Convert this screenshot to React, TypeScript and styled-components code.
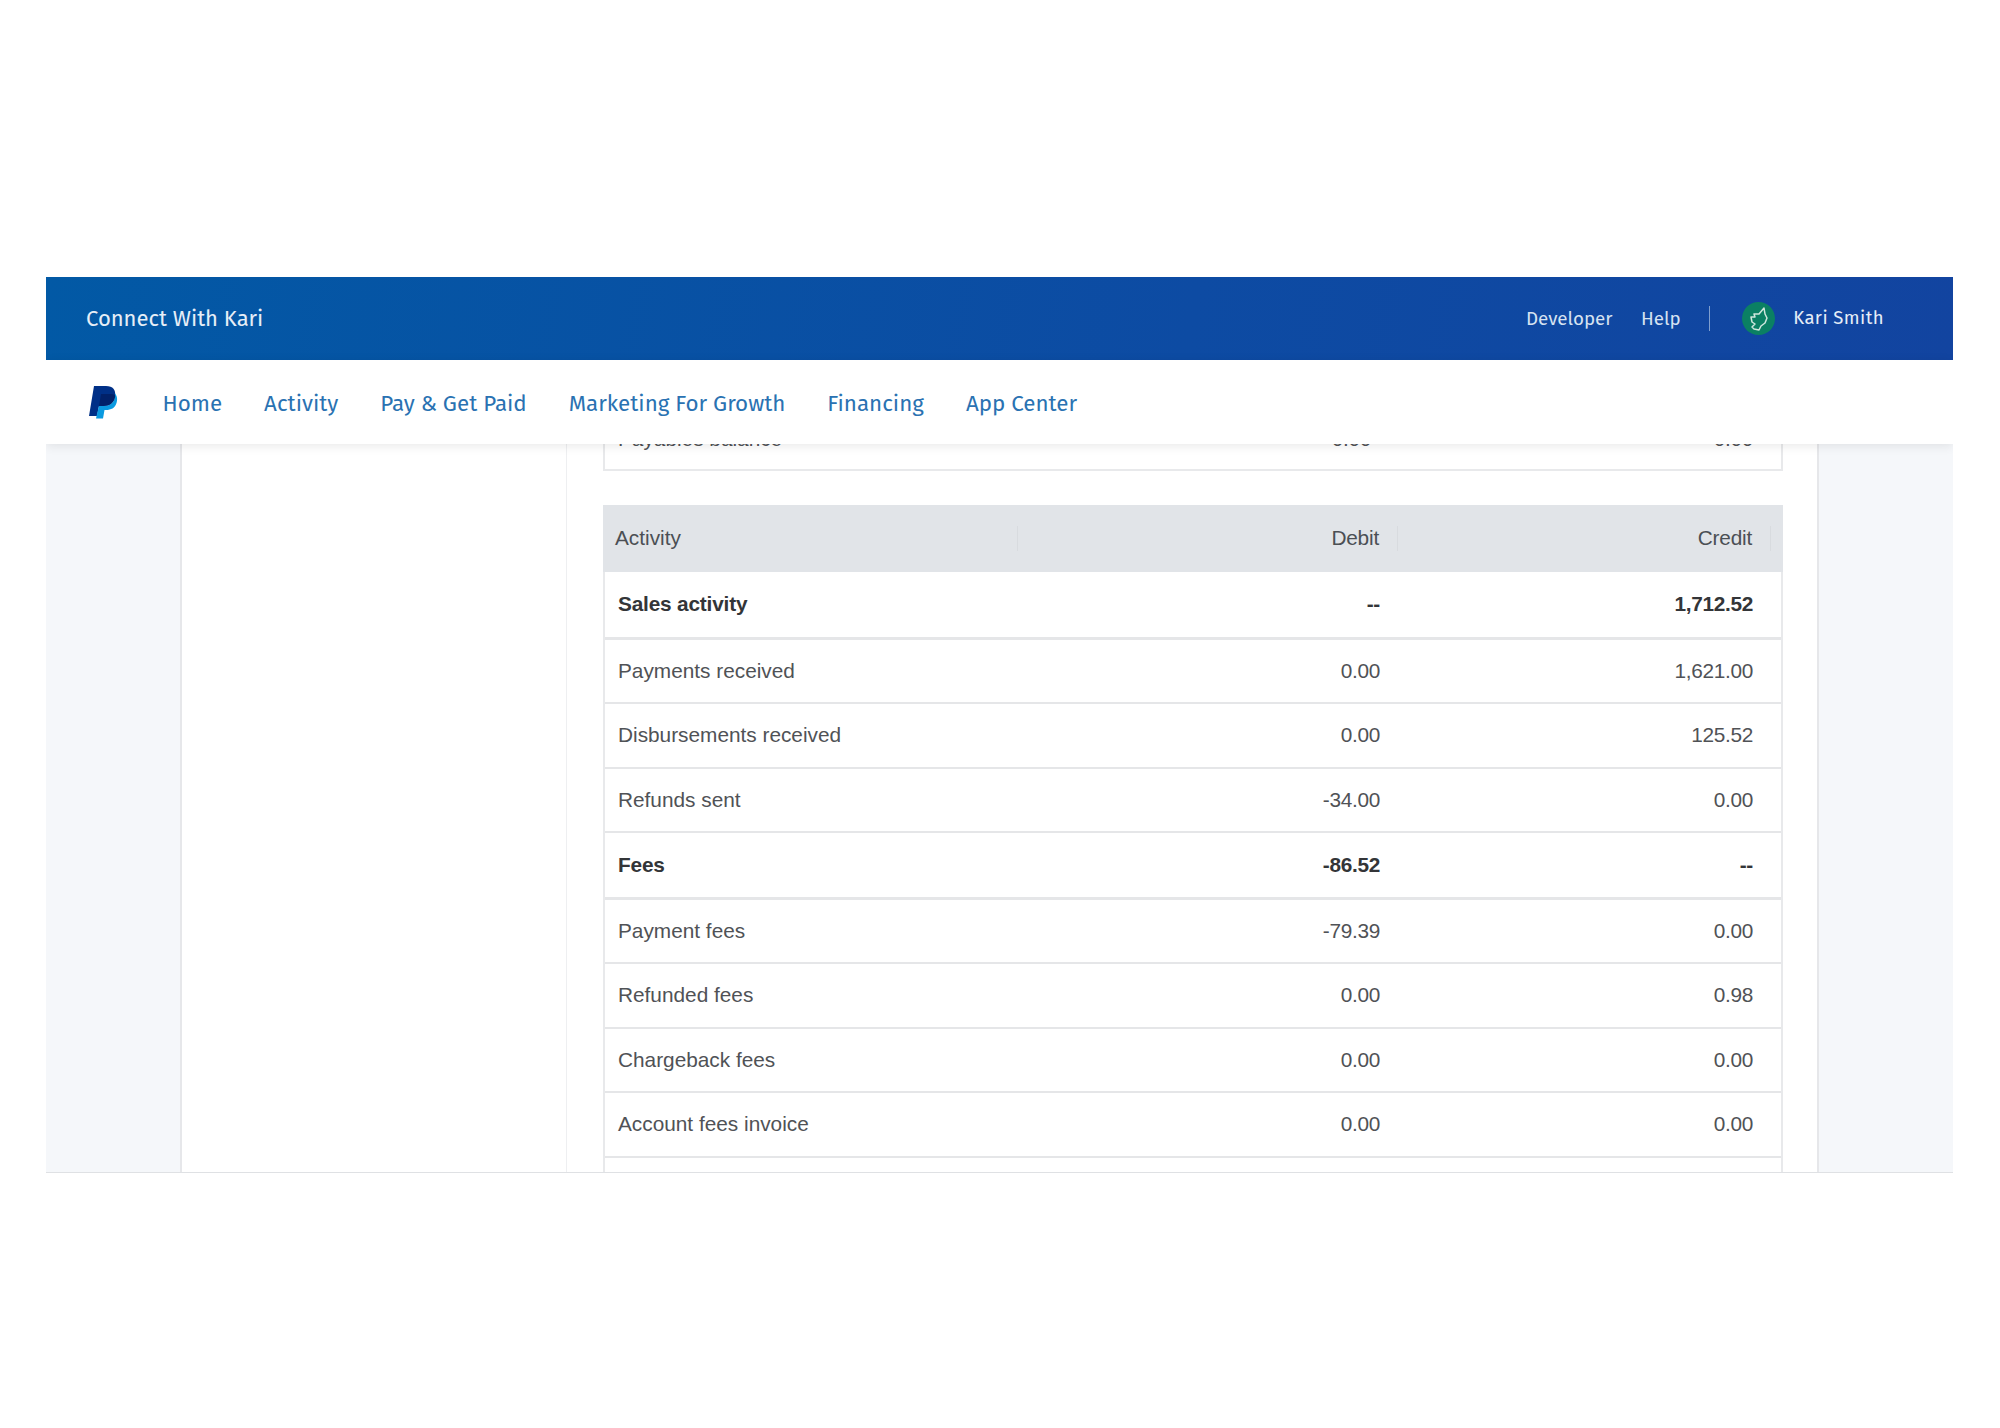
import React from "react";
import styled, { createGlobalStyle } from "styled-components";

const Global = createGlobalStyle`
  html, body { margin: 0; padding: 0; background: #fff; }
  * { box-sizing: border-box; }
`;

const Frame = styled.div`
  margin: 277px 0 0 46px;
  width: 1907px;
  height: 896px;
  display: flex;
  flex-direction: column;
  overflow: hidden;
  border-bottom: 1px solid #dfe1e4;
  background: #f5f7fa;
`;

const TopBar = styled.header`
  height: 83px;
  flex: none;
  display: flex;
  align-items: center;
  padding: 0 69px 0 40px;
  background: linear-gradient(100deg, #0259a5 0%, #0d4ba3 60%, #1244a0 100%);
  color: #e6eef7;
  font-family: "Fira Sans", "Noto Sans", sans-serif;
`;

const Brand = styled.div`
  font-size: 22px;
  flex: 1;
`;

const TopLink = styled.span`
  font-size: 18.8px;
  margin-right: 28.5px;
  color: #d6e2f1;
`;

const Separator = styled.span`
  width: 1px;
  height: 25px;
  background: #7f9fcf;
  margin-right: 32px;
`;

const Avatar = styled.svg`
  width: 33px;
  height: 33px;
  margin-right: 18px;
`;

const UserName = styled.span`
  font-size: 18.5px;
  letter-spacing: 0.4px;
  position: relative;
  top: -1px;
`;

const NavBar = styled.nav`
  height: 84px;
  flex: none;
  display: flex;
  align-items: center;
  padding: 0 0 0 42px;
  background: #fff;
  box-shadow: 0 2px 10px rgba(0, 0, 0, 0.09);
  position: relative;
  z-index: 2;
  font-family: "Fira Sans", "Noto Sans", sans-serif;
`;

const Logo = styled.svg`
  width: 30px;
  height: 34px;
  margin-right: 44.5px;
`;

const NavLink = styled.a`
  font-size: 22.35px;
  color: #2a72b2;
  margin-right: 42px;
  padding-top: 3px;
`;

const Body = styled.div`
  flex: 1;
  min-height: 0;
  display: flex;
  padding: 0 134px 0 134px;
`;

const Sidebar = styled.aside`
  width: 387px;
  flex: none;
  background: #fff;
  border-left: 2px solid #e6e7ea;
  border-right: 1px solid #eeeff1;
`;

const Main = styled.main`
  flex: 1;
  background: #fff;
  border-right: 2px solid #e6e7ea;
  padding: 0 34px 0 36px;
  overflow: hidden;
  font-family: "Liberation Sans", Arial, sans-serif;
`;

const Scrolled = styled.div`
  margin-top: -38px;
`;

const Table = styled.section`
  border: 2px solid #e8e9eb;
  border-top: none;
  margin-bottom: 34px;
  background: #fff;
`;

const BalanceRow = styled.div`
  display: grid;
  grid-template-columns: 413px 378px 1fr;
  align-items: center;
  height: 62.5px;
  padding-top: 3px;
  font-size: 20.8px;
  color: #505256;
`;

const Row = styled.div<{ $bold?: boolean; $first?: boolean }>`
  display: grid;
  grid-template-columns: 413px 378px 1fr;
  align-items: center;
  height: ${(p) => (p.$first ? "68px" : p.$bold ? "66.5px" : "64.5px")};
  border-bottom: ${(p) => (p.$bold ? "3px" : "2px")} solid #e5e6e8;
  font-size: 20.8px;
  font-weight: ${(p) => (p.$bold ? 700 : 400)};
  color: ${(p) => (p.$bold ? "#333538" : "#505256")};
`;

const LabelCell = styled.div<{ $bold?: boolean }>`
  padding-left: 13px;
  letter-spacing: ${(p) => (p.$bold ? "-0.18px" : "0")};
`;

const DebitCell = styled.div<{ $pad?: number }>`
  text-align: right;
  letter-spacing: -0.3px;
  padding-right: ${(p) => p.$pad ?? 16}px;
`;

const CreditCell = styled.div`
  text-align: right;
  letter-spacing: -0.3px;
  padding-right: 28px;
`;

const TableHead = styled.div`
  display: grid;
  grid-template-columns: 415px 380px 373px 1fr;
  align-items: center;
  height: 67px;
  margin: 0 -2px;
  background: #e1e4e8;
  font-size: 20.8px;
  color: #4b4f54;
`;

const HeadCell = styled.div<{ $right?: boolean }>`
  height: 25px;
  line-height: 24px;
  padding: 0 18px 0 12px;
  text-align: ${(p) => (p.$right ? "right" : "left")};
  letter-spacing: ${(p) => (p.$right ? "-0.2px" : "0")};
  border-right: 1px solid #d8dbdf;
`;

const rows: [string, string, string, boolean?][] = [
  ["Sales activity", "--", "1,712.52", true],
  ["Payments received", "0.00", "1,621.00"],
  ["Disbursements received", "0.00", "125.52"],
  ["Refunds sent", "-34.00", "0.00"],
  ["Fees", "-86.52", "--", true],
  ["Payment fees", "-79.39", "0.00"],
  ["Refunded fees", "0.00", "0.98"],
  ["Chargeback fees", "0.00", "0.00"],
  ["Account fees invoice", "0.00", "0.00"],
  ["", "", ""],
];

export default function App() {
  return (
    <>
      <Global />
      <Frame>
        <TopBar>
          <Brand>Connect With Kari</Brand>
          <TopLink>Developer</TopLink>
          <TopLink>Help</TopLink>
          <Separator />
          <Avatar viewBox="0 0 33 33">
            <circle cx="16.5" cy="16.5" r="16.5" fill="#0b8063" />
            <path
              d="M22 6 L23 12 L25 16 L23 21 L19 24 L17 28 L12 27 L10 25 L13 22 L10 20 L9 15 L13 15 L12 12 L17 12 Z"
              fill="none"
              stroke="#cfe6dd"
              strokeWidth="1.5"
              strokeLinejoin="round"
            />
          </Avatar>
          <UserName>Kari Smith</UserName>
        </TopBar>
        <NavBar>
          <Logo viewBox="0 0 30 34">
            <path d="M6 1 H18 C25 1 28 5 27 11 C26 18 21 21 15 21 H11 L9 31 H1 Z" fill="#003087" />
            <path d="M27 8.5 C29.5 11 29.5 15.5 28.5 18 C27 23 23 25 18 25 H16.5 L15 33.5 H8 L9 29 L11 21 H15 C22 21 27 18 27 8.5 Z" fill="#0a9ae0" />
            <path d="M11 21 L13 9 H23 C26 9 27.5 10 27.2 11.5 C26 18 22 21 15 21 Z" fill="#012169" />
          </Logo>
          <NavLink>Home</NavLink>
          <NavLink>Activity</NavLink>
          <NavLink>Pay &amp; Get Paid</NavLink>
          <NavLink>Marketing For Growth</NavLink>
          <NavLink>Financing</NavLink>
          <NavLink>App Center</NavLink>
        </NavBar>
        <Body>
          <Sidebar />
          <Main>
            <Scrolled>
              <Table>
                <BalanceRow>
                  <LabelCell>Payables balance</LabelCell>
                  <DebitCell $pad={25}>0.00</DebitCell>
                  <CreditCell>0.00</CreditCell>
                </BalanceRow>
              </Table>
              <Table>
                <TableHead>
                  <HeadCell>Activity</HeadCell>
                  <HeadCell $right>Debit</HeadCell>
                  <HeadCell $right>Credit</HeadCell>
                </TableHead>
                {rows.map(([label, debit, credit, bold], i) => (
                  <Row key={i} $bold={bold} $first={i === 0}>
                    <LabelCell $bold={bold}>{label}</LabelCell>
                    <DebitCell>{debit}</DebitCell>
                    <CreditCell>{credit}</CreditCell>
                  </Row>
                ))}
              </Table>
            </Scrolled>
          </Main>
        </Body>
      </Frame>
    </>
  );
}
